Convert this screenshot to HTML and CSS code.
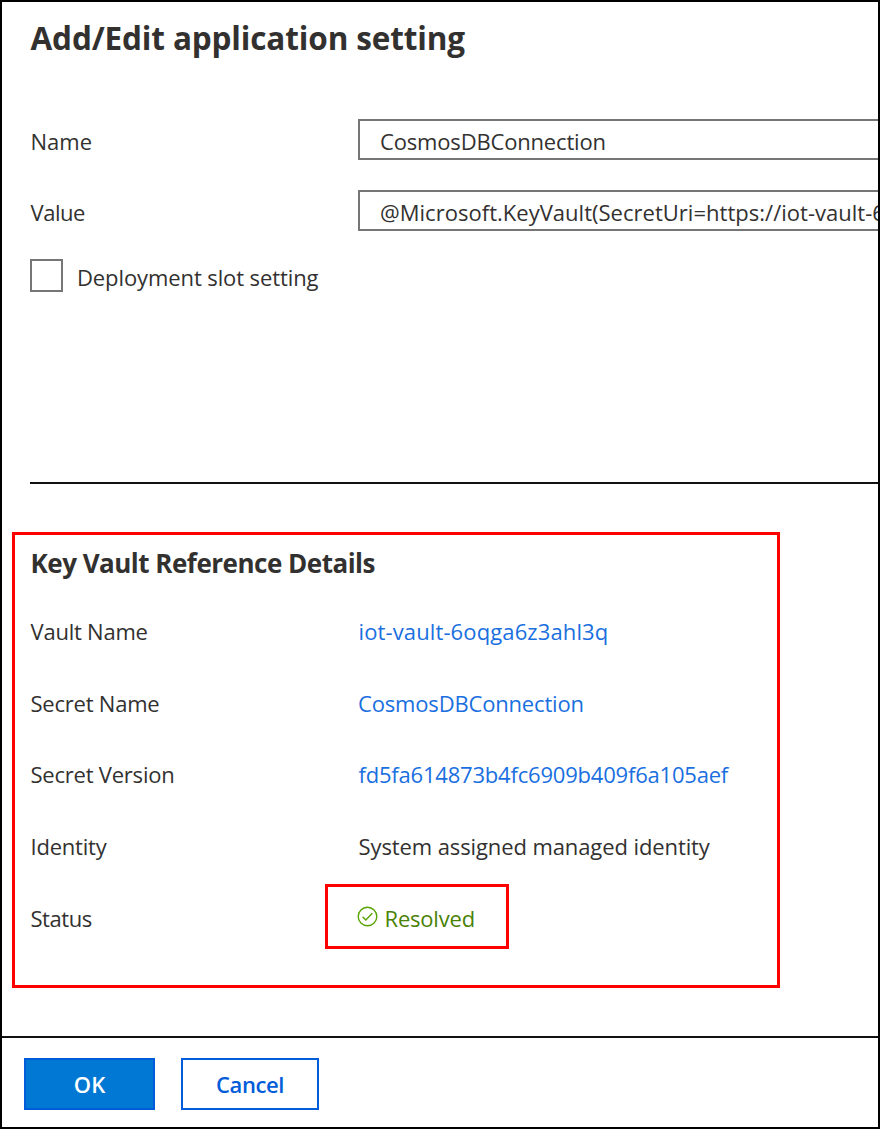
FILE: index.html
```html
<!DOCTYPE html>
<html lang="en">
<head>
<meta charset="utf-8">
<title>Add/Edit application setting</title>
<link rel="stylesheet" href="styles.css">
</head>
<body>
<main class="panel">
  <h1 class="title">Add/Edit application setting</h1>
  <form class="settings">
    <div class="row field-row"><label class="label">Name</label><div class="field name">CosmosDBConnection</div></div>
    <div class="row field-row"><label class="label tight">Value</label><div class="field uri">@Microsoft.KeyVault(SecretUri=https://iot-vault-6</div></div>
    <div class="slot"><i class="checkbox"></i><label class="slot-label">Deployment slot setting</label></div>
  </form>
  <section class="details">
    <h2 class="subtitle">Key Vault Reference Details</h2>
    <div class="row"><div class="label snug">Vault Name</div><a class="link vault">iot-vault-6oqga6z3ahl3q</a></div>
    <div class="row"><div class="label snug">Secret Name</div><a class="link name">CosmosDBConnection</a></div>
    <div class="row"><div class="label snug">Secret Version</div><a class="link version">fd5fa614873b4fc6909b409f6a105aef</a></div>
    <div class="row"><div class="label snug">Identity</div><div class="identity">System assigned managed identity</div></div>
    <div class="row"><div class="label tight">Status</div>
      <div class="status"><svg class="check" viewBox="0 0 21 21"><circle cx="10.5" cy="10.5" r="9.3"/><path d="M5.6 10.7l3.2 3.2 6.5-6.6"/></svg><span>Resolved</span></div>
    </div>
  </section>
  <footer class="footer">
    <button class="btn primary">OK</button>
    <button class="btn secondary">Cancel</button>
  </footer>
</main>
</body>
</html>
```
FILE: styles.css
```css
* { box-sizing: border-box; }

body {
  margin: 0;
  background: #fff;
  color: #323130;
  font: 22px/30px "Open Sans", "Noto Sans", sans-serif;
}

.panel {
  display: flex;
  flex-direction: column;
  width: 880px;
  height: 1129px;
  border: 2px solid #000;
  overflow: hidden;
}

.title {
  margin: 15px 0 0 28.5px;
  font-size: 31.5px;
  line-height: 42px;
  font-weight: 700;
  letter-spacing: -0.14px;
  white-space: nowrap;
}

.settings {
  height: 425px;
  margin-left: 28px;
  padding-top: 60px;
  border-bottom: 2px solid #111;
}

.row {
  display: grid;
  grid-template-columns: 328px 1fr;
  align-items: center;
  white-space: nowrap;
}

.label { padding-left: 0.5px; }
.snug { letter-spacing: -0.22px; }
.tight { letter-spacing: -0.45px; }
.name { letter-spacing: -0.17px; }
.uri { letter-spacing: 0.02px; }

.field-row { height: 41px; margin-bottom: 30px; }
.field-row .label { padding-top: 3px; }

.field {
  display: flex;
  align-items: center;
  height: 41px;
  padding: 3px 0 0 20px;
  border: 2px solid #767676;
  border-right: 0;
  overflow: hidden;
}

.slot { display: flex; align-items: center; gap: 14px; margin-top: -2px; }
.slot-label { padding-top: 2px; letter-spacing: -0.1px; }

.checkbox { width: 33px; height: 33px; border: 2px solid #767676; }

.details {
  width: 768px;
  height: 456px;
  margin: 48px 0 0 10px;
  padding: 11px 0 0 15px;
  border: 3px solid #f00;
}

.subtitle {
  margin: 0 0 15.5px;
  padding-left: 0.5px;
  font-size: 26px;
  line-height: 34px;
  font-weight: 700;
  letter-spacing: -0.5px;
}

.details .row { height: 71.6px; }

.link { color: #1a6fe0; }
.vault { padding-left: 0.5px; letter-spacing: 0.12px; }
.version { padding-left: 0.5px; letter-spacing: -0.2px; }
.identity { padding-left: 0.5px; letter-spacing: -0.1px; }

.status {
  display: flex;
  align-items: center;
  gap: 6.5px;
  width: 184px;
  height: 65px;
  margin: -2px 0 0 -33px;
  padding: 3px 0 0 29px;
  border: 3px solid #f00;
  color: #498205;
  letter-spacing: -0.2px;
}

.check {
  width: 21px;
  height: 21px;
  margin-top: -3px;
  fill: none;
  stroke: #57a300;
  stroke-width: 1.4;
}

.footer {
  display: flex;
  gap: 26px;
  margin-top: 48px;
  padding: 20px 0 0 22px;
  border-top: 2px solid #111;
  flex: 1;
}

.btn {
  height: 52px;
  padding: 0;
  border: 2px solid #015cda;
  font: 600 22px/30px "Open Sans", "Noto Sans", sans-serif;
}

.primary { width: 131px; background: #0078d4; color: #fff; }
.secondary { width: 138px; background: #fff; color: #015cda; letter-spacing: -0.4px; }
```
